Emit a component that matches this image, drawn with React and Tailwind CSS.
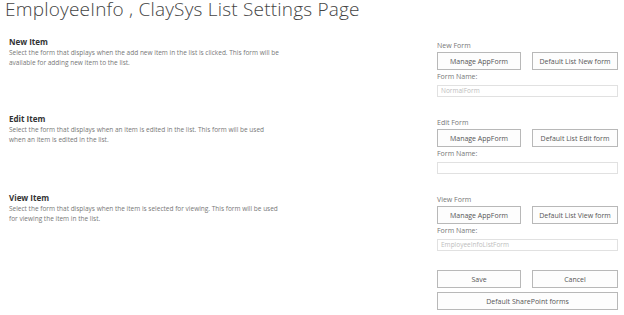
import React from 'react';

const sections = [
  {
    title: 'New Item',
    desc: ['Select the form that displays when the add new item in the list is clicked. This form will be', 'available for adding new item to the list.'],
    label: 'New Form',
    defaultBtn: 'Default List New form',
    value: 'NormalForm',
    pad: 'pt-[2px]',
  },
  {
    title: 'Edit Item',
    desc: ['Select the form that displays when an item is edited in the list. This form will be used', 'when an item is edited in the list.'],
    label: 'Edit Form',
    defaultBtn: 'Default List Edit form',
    value: '',
    pad: 'pt-[2px]',
  },
  {
    title: 'View Item',
    desc: ['Select the form that displays when the item is selected for viewing. This form will be used', 'for viewing the item in the list.'],
    label: 'View Form',
    defaultBtn: 'Default List View form',
    value: 'EmployeeInfoListForm',
    pad: 'pt-[4px]',
  },
];

const Btn = ({ children }) => (
  <button className="h-[18px] border border-[#b8b8b8] bg-[#fdfdfd] text-[7px] leading-none text-[#555]">
    {children}
  </button>
);

export default function App() {
  return (
    <div className="w-[624px] h-[315px] bg-white overflow-hidden font-['Open_Sans',sans-serif]">
      {/* Page title */}
      <h1 className="pl-[5px] text-[19px] leading-[19px] font-light text-[#444] tracking-[0.2px]">
        EmployeeInfo , ClaySys List Settings Page
      </h1>

      <div className="mt-[16px]">
        {sections.map((s) => (
          <div key={s.title} className="flex h-[77px]">
            <div className={`w-[437px] pl-[9px] ${s.pad}`}>
              <h3 className="text-[8px] leading-[10px] font-bold text-[#333]">{s.title}</h3>
              <div className="mt-[1px] text-[6.5px] leading-[10px] text-[#777]">
                {s.desc.map((line) => (
                  <p key={line}>{line}</p>
                ))}
              </div>
            </div>
            <div className="w-[181px] pt-[6px]">
              <div className="text-[7px] leading-[10px] text-[#777]">{s.label}</div>
              <div className="mt-[1px] grid grid-cols-[84px_86px] gap-[11px]">
                <Btn>Manage AppForm</Btn>
                <Btn>{s.defaultBtn}</Btn>
              </div>
              <div className="mt-[2px] text-[7px] leading-[10px] text-[#777]">Form Name:</div>
              <div className="mt-[3px] h-[12px] border border-[#e1e1e1] px-[3px] text-[6.5px] leading-[10px] text-[#bdbdbd]">
                {s.value}
              </div>
            </div>
          </div>
        ))}

        <div className="ml-[437px] w-[181px] mt-[4px]">
          <div className="grid grid-cols-[84px_86px] gap-[11px]">
            <Btn>Save</Btn>
            <Btn>Cancel</Btn>
          </div>
          <div className="mt-[4px] grid">
            <Btn>Default SharePoint forms</Btn>
          </div>
        </div>
      </div>
    </div>
  );
}
